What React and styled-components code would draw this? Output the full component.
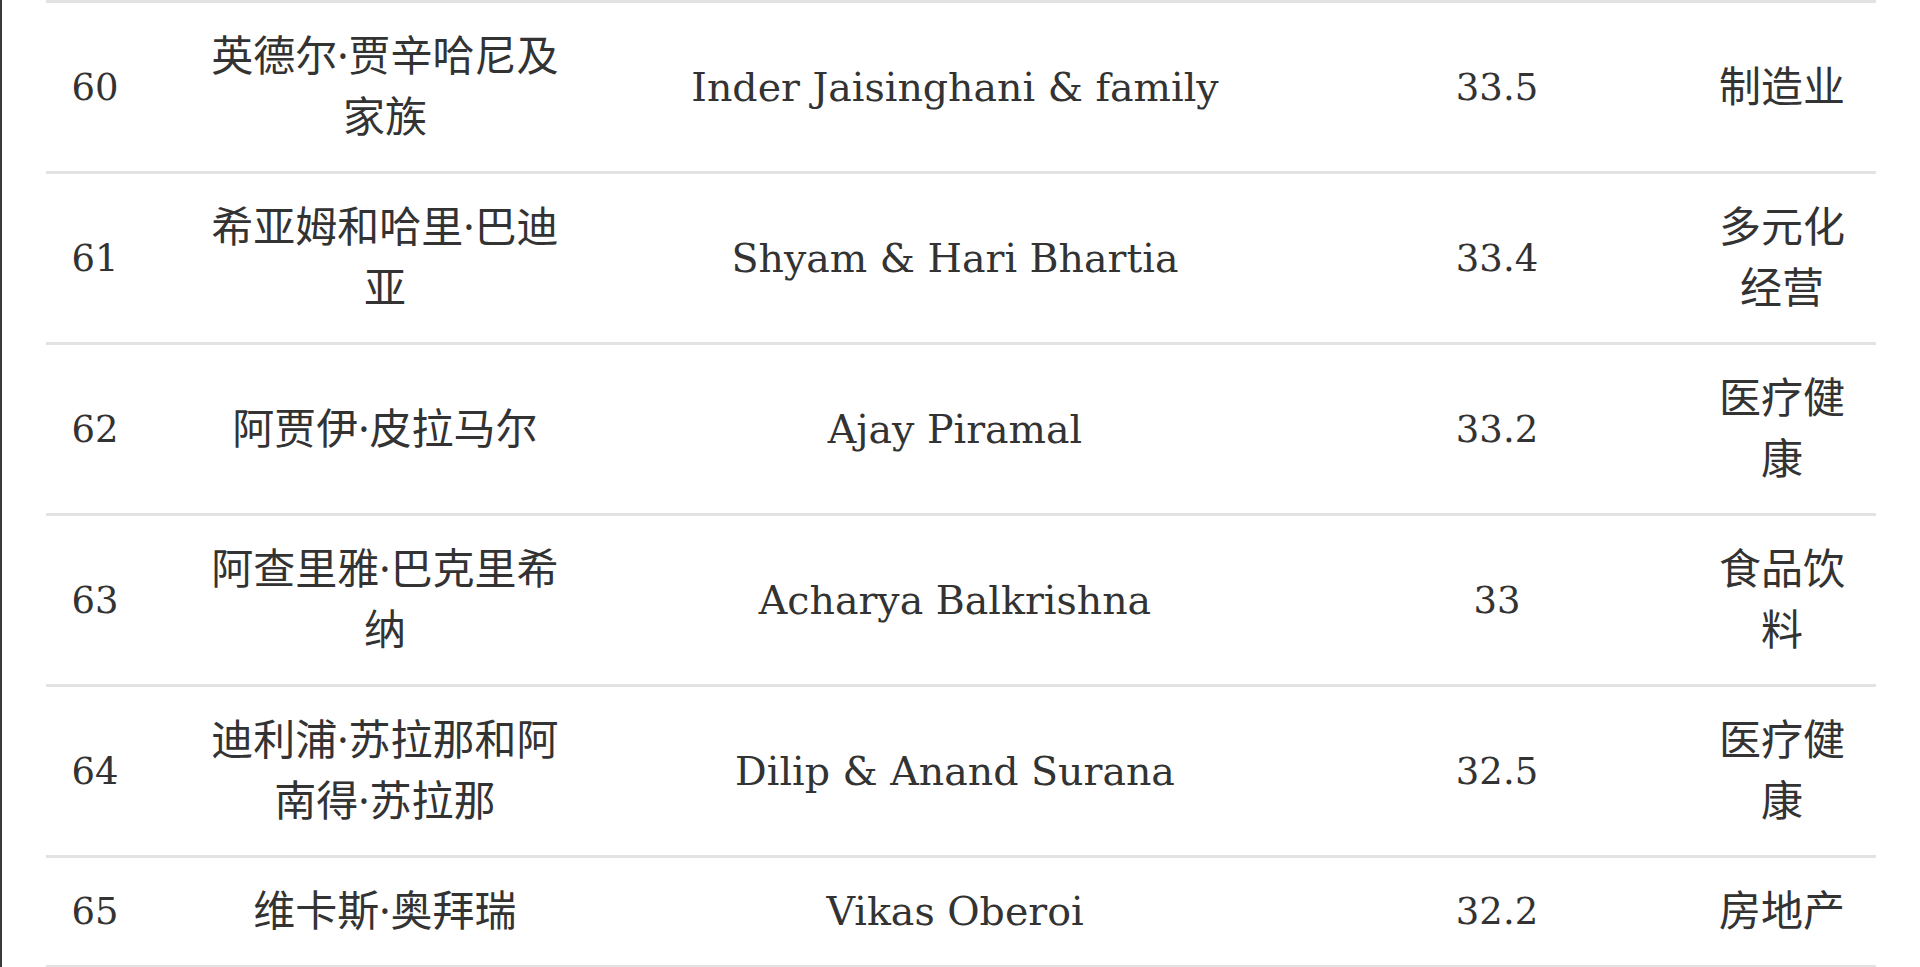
import React from "react"
import styled, { createGlobalStyle } from "styled-components"

const rows = [
  { rank: 60, zh: "英德尔·贾辛哈尼及家族", en: "Inder Jaisinghani & family", worth: "33.5", sector: "制造业" },
  { rank: 61, zh: "希亚姆和哈里·巴迪亚", en: "Shyam & Hari Bhartia", worth: "33.4", sector: "多元化经营" },
  { rank: 62, zh: "阿贾伊·皮拉马尔", en: "Ajay Piramal", worth: "33.2", sector: "医疗健康" },
  { rank: 63, zh: "阿查里雅·巴克里希纳", en: "Acharya Balkrishna", worth: "33", sector: "食品饮料" },
  { rank: 64, zh: "迪利浦·苏拉那和阿南得·苏拉那", en: "Dilip & Anand Surana", worth: "32.5", sector: "医疗健康" },
  { rank: 65, zh: "维卡斯·奥拜瑞", en: "Vikas Oberoi", worth: "32.2", sector: "房地产" }
]

const widths = [98, 482, 680, 382, 188]

const App = () => {
  return (
    <Page>
      <GlobalStyle />
      <Table>
        <colgroup>
          {widths.map((w, i) => (
            <Col key={i} $w={w} />
          ))}
        </colgroup>
        <tbody>
          {rows.map(row => (
            <TR key={row.rank}>
              <NumCell>{row.rank}</NumCell>
              <ZhCell $wide>{row.zh}</ZhCell>
              <EnCell>{row.en}</EnCell>
              <NumCell>{row.worth}</NumCell>
              <ZhCell>{row.sector}</ZhCell>
            </TR>
          ))}
        </tbody>
      </Table>
    </Page>
  )
}

/**********BEGIN STYLING**********/
const GlobalStyle = createGlobalStyle`
  html, body {
    margin: 0;
    background: #ffffff;
  }
  body {
    font-family: "DejaVu Serif", "Noto Sans CJK SC", serif;
    color: #333333;
    overflow: hidden;
  }
`
const Page = styled.div`
  min-height: 967px;
  border-left: 2px solid #3a3a3a;
  padding-left: 44px;
  box-sizing: border-box;
`
const Table = styled.table`
  width: 1830px;
  table-layout: fixed;
  border-collapse: collapse;
`
const Col = styled.col`
  width: ${p => p.$w}px;
`
const TR = styled.tr`
  border-top: 3px solid #e3e3e3;
  border-bottom: 3px solid #e3e3e3;
`
const Cell = styled.td`
  line-height: 61px;
  padding: 23px 24px;
  text-align: center;
  vertical-align: middle;
  word-break: break-all;
`
const NumCell = styled(Cell)`
  font-family: "DejaVu Serif", serif;
  font-size: 37px;
`
const EnCell = styled(Cell)`
  font-family: "DejaVu Serif", serif;
  font-size: 39.5px;
  padding-right: 46px;
`
const ZhCell = styled(Cell)`
  font-family: "Noto Sans", "Noto Sans CJK SC", sans-serif;
  font-size: 42px;
  padding-left: ${p => (p.$wide ? "62px" : "24px")};
  padding-right: ${p => (p.$wide ? "62px" : "24px")};
  padding-top: 21px;
  padding-bottom: 25px;
`
/**********END STYLING**********/

export default App
